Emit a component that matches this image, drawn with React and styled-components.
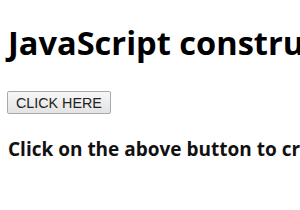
import React from "react";
import styled, { createGlobalStyle } from "styled-components";

const Global = createGlobalStyle`
  html, body { margin: 0; padding: 0; background: #fff; }
  body { overflow: hidden; }
`;

const Page = styled.div`
  width: 300px;
  height: 210px;
  padding: 0 0 0 8px;
  box-sizing: border-box;
  font-family: "Open Sans", "Noto Sans", sans-serif;
  color: #000;
  display: flex;
  flex-direction: column;
  align-items: flex-start;
  overflow: hidden;
`;

const Title = styled.h1`
  margin: 23px 0 0 0;
  font-size: 32.6px;
  font-weight: 700;
  line-height: 40px;
  white-space: nowrap;
`;

const Button = styled.button`
  margin: 28px 0 0 -1px;
  height: 23px;
  padding: 0 8px;
  font-family: "Liberation Sans", Arial, sans-serif;
  font-size: 14.3px;
  color: #222;
  background: linear-gradient(#f7f7f7, #e3e3e3);
  border: 1px solid #a9a9a9;
  border-radius: 2px;
`;

const Note = styled.p`
  margin: 22px 0 0 0;
  font-size: 19px;
  font-weight: 700;
  line-height: 26px;
  white-space: nowrap;
  color: #111;
`;

export default function App() {
  return (
    <>
      <Global />
      <Page>
        <Title>JavaScript constructor</Title>
        <Button>CLICK HERE</Button>
        <Note>Click on the above button to create a new object</Note>
      </Page>
    </>
  );
}
